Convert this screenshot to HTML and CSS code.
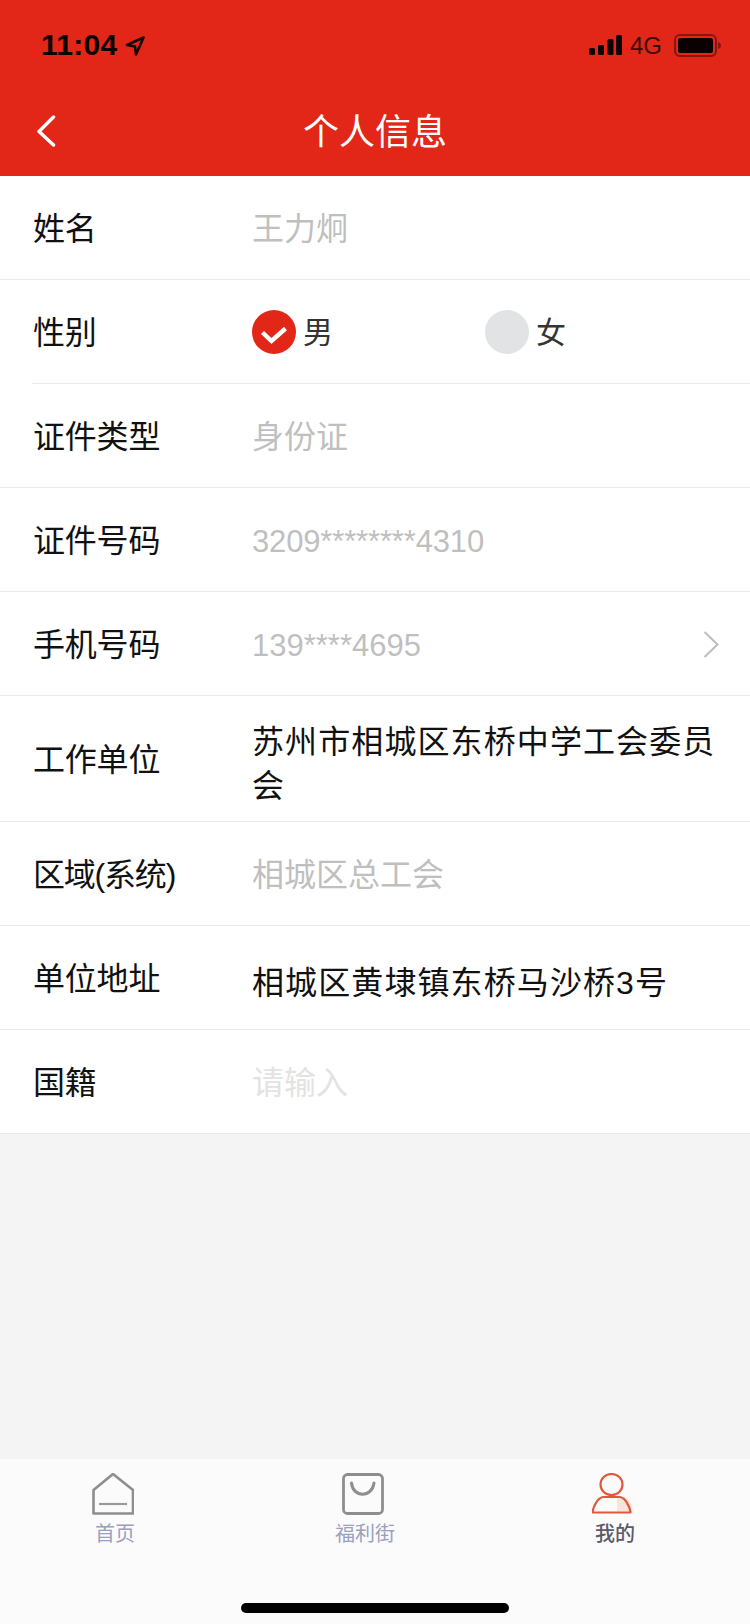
FILE: index.html
```html
<!DOCTYPE html>
<html lang="zh-CN">
<head>
<meta charset="utf-8">
<title>个人信息</title>
<link rel="stylesheet" href="styles.css">
</head>
<body>
<div class="page">
  <header class="header">
    <div class="status">
      <div class="status-left">
        <span class="time">11:04</span>
        <svg class="loc" width="20" height="20" viewBox="0 0 20 20"><path d="M18.500 1.500 2 9 10 10.500 11 18.500Z" fill="none" stroke="#1a0505" stroke-width="2.600" stroke-linejoin="round"/></svg>
      </div>
      <div class="status-right">
        <svg class="signal" width="33" height="20" viewBox="0 0 33 20"><rect x="0" y="13" width="6" height="7" rx="1.500"/><rect x="9" y="10" width="6" height="10" rx="1.500"/><rect x="18.500" y="4" width="6" height="16" rx="1.500"/><rect x="27" y="0" width="6" height="20" rx="1.500"/></svg>
        <span class="net">4G</span>
        <svg class="battery" width="48" height="23" viewBox="0 0 48 23"><rect x="1" y="1" width="41" height="21" rx="5" fill="none" stroke="#8a140e" stroke-width="2"/><rect x="4" y="4" width="35" height="15" rx="2.500" fill="#0a0202"/><path d="M44 8q3 1 3 3.500t-3 3.500Z" fill="#8a140e"/></svg>
      </div>
    </div>
    <nav class="nav">
      <svg class="back" width="20" height="32" viewBox="0 0 20 32"><path d="M17.500 2 3 16.500 17.500 30" fill="none" stroke="#fff" stroke-width="3.400" stroke-linecap="round" stroke-linejoin="round"/></svg>
      <h1 class="title">个人信息</h1>
    </nav>
  </header>

  <main class="form">
    <div class="row"><span class="label">姓名</span><span class="value muted">王力炯</span></div>
    <div class="row row-inset">
      <span class="label">性别</span>
      <div class="value radios">
        <div class="radio">
          <span class="dot dot-on"><svg width="44" height="44" viewBox="0 0 44 44"><path d="M10.500 22.500 19.500 31 33.500 18.500" fill="none" stroke="#fff" stroke-width="4.400"/></svg></span>
          <span class="radio-text">男</span>
        </div>
        <div class="radio">
          <span class="dot dot-off"></span>
          <span class="radio-text">女</span>
        </div>
      </div>
    </div>
    <div class="row"><span class="label">证件类型</span><span class="value muted">身份证</span></div>
    <div class="row"><span class="label">证件号码</span><span class="value muted num num-id">3209********4310</span></div>
    <div class="row">
      <span class="label">手机号码</span><span class="value muted num">139****4695</span>
      <svg class="arrow" width="16" height="27" viewBox="0 0 16 27"><path d="M1.500 1 14.500 13.500 1.500 26" fill="none" stroke="#bdbdbd" stroke-width="2"/></svg>
    </div>
    <div class="row row-tall"><span class="label">工作单位</span><span class="value dark long">苏州市相城区东桥中学工会委员会</span></div>
    <div class="row"><span class="label label-tight">区域(系统)</span><span class="value muted">相城区总工会</span></div>
    <div class="row"><span class="label">单位地址</span><span class="value dark low">相城区黄埭镇东桥马沙桥3号</span></div>
    <div class="row"><span class="label">国籍</span><span class="value hint">请输入</span></div>
  </main>

  <div class="spacer"></div>

  <footer class="tabbar">
    <div class="tabs">
      <div class="tab">
        <svg class="tab-icon" width="42" height="42" viewBox="0 0 42 42"><path d="M21 1 41 17V40.500H1.500V17Z" fill="none" stroke="#8e8e8e" stroke-width="2.600" stroke-linejoin="round"/><path d="M7 31H35" stroke="#9a9a9a" stroke-width="2.200"/></svg>
        <span class="tab-text">首页</span>
      </div>
      <div class="tab">
        <svg class="tab-icon" width="42" height="42" viewBox="0 0 42 42"><rect x="1.500" y="1.500" width="39" height="39" rx="4" fill="none" stroke="#8e8e8e" stroke-width="2.800"/><path d="M9.500 10C11 25 30 25 32 10" fill="none" stroke="#8e8e8e" stroke-width="3" stroke-linecap="round"/></svg>
        <span class="tab-text">福利街</span>
      </div>
      <div class="tab tab-active">
        <svg class="tab-icon" width="42" height="42" viewBox="0 0 42 42"><path d="M25 24H33C37 26 40 30 40.500 38.500H25Z" fill="#fbe3dd"/><ellipse cx="19.500" cy="11.500" rx="11" ry="10.500" fill="none" stroke="#e2583a" stroke-width="2.200"/><path d="M11 24H28C33 25 37.500 32 38.500 39.500H0.500C1.500 32 6 25 11 24Z" fill="none" stroke="#e2583a" stroke-width="2.200" stroke-linejoin="round"/></svg>
        <span class="tab-text">我的</span>
      </div>
    </div>
    <div class="home-bar"></div>
  </footer>
</div>
</body>
</html>
```

FILE: styles.css
```css
* { box-sizing: border-box; }

html, body { margin: 0; padding: 0; }

body {
  font-family: "Liberation Sans", "Noto Sans CJK SC", sans-serif;
  color: #111;
  background: #f4f4f4;
}

.page {
  display: flex;
  flex-direction: column;
  width: 750px;
  height: 1624px;
  overflow: hidden;
}

/* header */
.header { background: #e22618; height: 176px; flex: none; }

.status {
  display: flex;
  justify-content: space-between;
  align-items: center;
  height: 88px;
  padding: 1px 28px 0 41px;
}

.status-left, .status-right { display: flex; align-items: center; }

.time { font-size: 30px; font-weight: 700; letter-spacing: 0.3px; color: #0d0303; }

.loc { margin-left: 7px; margin-top: 2px; }

.signal { fill: #0d0303; }

.net { font-size: 24px; color: #3a0c08; margin: 2px 12px 0 8px; }

.battery { margin-top: 2px; }

.nav {
  display: grid;
  grid-template-columns: 1fr auto 1fr;
  align-items: center;
  height: 88px;
  padding-left: 36px;
}

.back { margin-top: -2px; }

.title {
  margin: 2px 0 0;
  font-size: 36px;
  font-weight: 400;
  line-height: 44px;
  color: #fff;
  transform: translateX(-18px);
}

/* form rows */
.form { background: #fff; flex: none; }

.row {
  position: relative;
  display: flex;
  align-items: center;
  height: 104px;
  padding-left: 33px;
  border-bottom: 1px solid #ebebeb;
}

.row-tall { height: 126px; }

.row-inset { border-bottom: 0; }

.row-inset::after {
  content: "";
  position: absolute;
  left: 32px;
  right: 0;
  bottom: 0;
  height: 1px;
  background: #ebebeb;
}

.label {
  flex: none;
  width: 219px;
  padding-top: 2px;
  font-size: 32px;
  line-height: 44px;
  letter-spacing: -0.2px;
  color: #111;
}

.label-tight { letter-spacing: -1.2px; }

.value {
  flex: 1;
  min-width: 0;
  padding: 3px 20px 0 0;
  font-size: 32px;
  line-height: 44px;
}

.muted { color: #bfbfbf; }

.num { font-size: 31px; padding-top: 4px; }

.num-id { letter-spacing: -0.15px; }

.dark { color: #111; letter-spacing: 1.1px; }

.long { padding-top: 11px; }

.low { padding-top: 10px; }

.hint { color: #e3e3e3; }

.radios { display: flex; padding: 0; }

.radio { display: flex; align-items: center; width: 233px; }

.dot { display: block; width: 44px; height: 44px; border-radius: 50%; }

.dot svg { display: block; }

.dot-on { background: #e22618; }

.dot-off { background: #e2e3e5; }

.radio-text { margin: 2px 0 0 7px; font-size: 30px; color: #333; }

.arrow { flex: none; margin-right: 31px; margin-top: 1px; }

.spacer { flex: 1; }

/* tab bar */
.tabbar { flex: none; height: 165px; background: #fbfbfc; }

.tabs {
  display: grid;
  grid-template-columns: repeat(3, 250px);
  margin-left: -10px;
  padding-top: 14px;
}

.tab { display: flex; flex-direction: column; align-items: center; }

.tab-icon { display: block; margin-left: -4px; }

.tab-text {
  margin-top: 5px;
  font-size: 20px;
  line-height: 28px;
  color: #9aa0bd;
}

.tab-active .tab-text { color: #5a5a68; font-weight: 500; }

.home-bar {
  width: 268px;
  height: 10px;
  margin: 55px 0 0 241px;
  border-radius: 5px;
  background: #000;
}
```
